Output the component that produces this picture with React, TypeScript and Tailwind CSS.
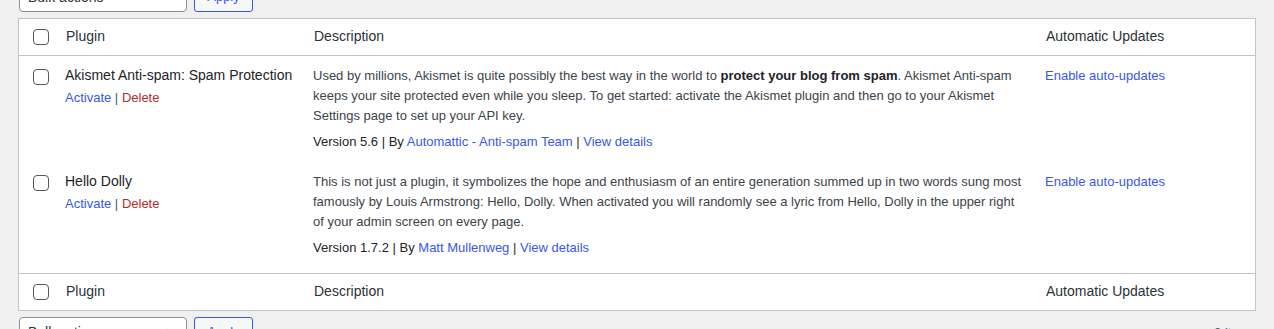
import React from "react";

const Check = () => (
  <span className="block w-4 h-4 rounded-[4px] border border-[#50575e] bg-white" />
);

const Chevron = () => (
  <svg width="16" height="16" viewBox="0 0 20 20" className="text-[#50575e]">
    <path d="M5 6l5 5 5-5 2 1-7 7-7-7z" fill="currentColor" />
  </svg>
);

const TableNav = ({ label, top }: { label: string; top?: boolean }) => (
  <div className={`flex items-center gap-[7px] h-[30px] ${top ? "-mt-[18px]" : ""}`}>
    <div className="ml-[1px] w-[168px] h-[30px] flex items-center justify-between pl-[8px] pr-[6px] border border-[#8c8f94] rounded-[4px] bg-white text-[14px] text-[#2c3338]">
      <span>{label}</span>
      <Chevron />
    </div>
    <div className="w-[59px] h-[30px] flex items-center justify-center border border-[#3858e9] rounded-[3px] bg-[#f6f7f7] text-[13px] text-[#3858e9]">
      Apply
    </div>
  </div>
);

const HeaderRow = ({ bottom }: { bottom?: boolean }) => (
  <div
    className={`grid grid-cols-[38px_248px_732px_1fr] h-[37px] items-center text-[14px] text-[#2c3338] ${
      bottom ? "border-t border-[#c3c4c7]" : "border-b border-[#c3c4c7]"
    }`}
  >
    <div className="pl-[14px]">
      <Check />
    </div>
    <div className="pl-[9px] pb-[2px]">Plugin</div>
    <div className="pl-[9px] pb-[2px]">Description</div>
    <div className="pl-[9px] pb-[2px]">Automatic Updates</div>
  </div>
);

const Row = ({
  name,
  desc,
  version,
  author,
  pb,
}: {
  name: string;
  desc: React.ReactNode;
  version: string;
  author: string;
  pb: string;
}) => (
  <div className={`grid grid-cols-[38px_248px_732px_1fr] pt-[10px] ${pb}`}>
    <div className="pl-[14px] pt-[3px]">
      <Check />
    </div>
    <div className="pl-[8px]">
      <div className="text-[14px] leading-[19px] text-[#1d2327]">{name}</div>
      <div className="text-[13px] leading-[20px] mt-[3px] text-[#50575e]">
        <span className="text-[#3858e9]">Activate</span> |{" "}
        <span className="text-[#b32d2e]">Delete</span>
      </div>
    </div>
    <div className="pl-[8px] pr-[14px] text-[13px] leading-[20px] text-[#3c434a]">
      <div>{desc}</div>
      <div className="mt-[6px] text-[#1d2327]">
        Version {version} | By <span className="text-[#3858e9]">{author}</span> |{" "}
        <span className="text-[#3858e9]">View details</span>
      </div>
    </div>
    <div className="pl-[8px] text-[13px] leading-[20px] text-[#3858e9]">Enable auto-updates</div>
  </div>
);

export default function App() {
  return (
    <div
      className="w-[1274px] h-[329px] overflow-hidden bg-[#f0f0f1] px-[18px]"
      style={{ fontFamily: '"Liberation Sans", Arial, sans-serif' }}
    >
      <TableNav label="Bulk actions" top />
      <div className="mt-[6px] border border-[#c3c4c7] bg-white">
        <HeaderRow />
        <Row
          name="Akismet Anti-spam: Spam Protection"
          desc={
            <>
              Used by millions, Akismet is quite possibly the best way in the world to{" "}
              <strong className="font-bold text-[#1d2327]">protect your blog from spam</strong>. Akismet
              Anti-spam keeps your site protected even while you sleep. To get started: activate the Akismet
              plugin and then go to your Akismet Settings page to set up your API key.
            </>
          }
          version="5.6"
          author="Automattic - Anti-spam Team"
          pb="pb-[10px]"
        />
        <Row
          name="Hello Dolly"
          desc={
            <>
              This is not just a plugin, it symbolizes the hope and enthusiasm of an entire generation summed
              up in two words sung most famously by Louis Armstrong: Hello, Dolly. When activated you will
              randomly see a lyric from Hello, Dolly in the upper right of your admin screen on every page.
            </>
          }
          version="1.7.2"
          author="Matt Mullenweg"
          pb="pb-[15px]"
        />
        <HeaderRow bottom />
      </div>
      <div className="mt-[6px] flex items-start justify-between">
        <TableNav label="Bulk actions" />
        <div className="pt-[6px] text-[13px] text-[#50575e]">2 items</div>
      </div>
    </div>
  );
}
